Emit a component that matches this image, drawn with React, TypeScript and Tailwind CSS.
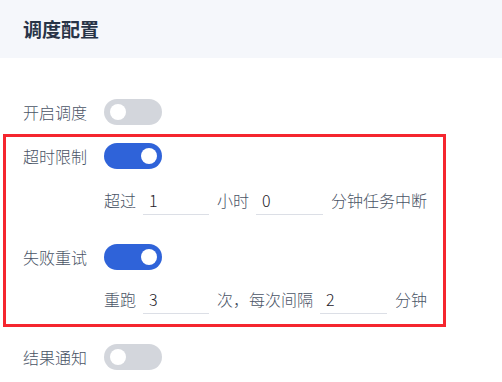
import { useState } from "react";

const font = { fontFamily: '"Noto Sans CJK SC", "Noto Sans", sans-serif' };

function Toggle({ on, onChange }: { on: boolean; onChange: () => void }) {
  return (
    <button
      onClick={onChange}
      className={`relative w-[58px] h-[26px] rounded-full shrink-0 transition-colors ${on ? "bg-[#2f63d9]" : "bg-[#d3d6dc]"}`}
    >
      <span
        className={`absolute top-[5px] w-[16px] h-[16px] rounded-full bg-white transition-all ${on ? "left-[37px]" : "left-[6px]"}`}
      />
    </button>
  );
}

function Row({ label, on, onChange }: { label: string; on: boolean; onChange: () => void }) {
  return (
    <div className="flex items-center h-[26px]">
      <span className="w-[81px] text-[16px] leading-none font-light text-[#4a5466]">{label}</span>
      <Toggle on={on} onChange={onChange} />
    </div>
  );
}

function NumInput({ value, w = "w-[66px]" }: { value: string; w?: string }) {
  return (
    <input
      defaultValue={value}
      className={`${w} h-[30px] ml-[7px] mr-[8px] px-[6px] border-b border-[#dcdfe6] text-[16px] font-light text-[#1d2129] outline-none bg-transparent`}
    />
  );
}

export default function App() {
  const [enabled, setEnabled] = useState(false);
  const [timeout, setTimeoutOn] = useState(true);
  const [retry, setRetry] = useState(true);
  const [notify, setNotify] = useState(false);

  return (
    <div className="w-[502px] h-[382px] bg-white overflow-hidden" style={font}>
      {/* header */}
      <div className="h-[58px] bg-[#f5f7fb] flex items-center pl-[23px]">
        <h1 className="text-[19px] font-bold text-[#283447]">调度配置</h1>
      </div>

      <div className="pt-[41px] pl-[23px]">
        <Row label="开启调度" on={enabled} onChange={() => setEnabled(!enabled)} />
      </div>

      {/* highlighted block */}
      <div className="mt-[9px] ml-[3px] w-[443px] border-[3px] border-[#f5262f] pl-[17px] pt-[6px] pb-[10px]">
        <Row label="超时限制" on={timeout} onChange={() => setTimeoutOn(!timeout)} />
        <div className="flex items-center text-[16px] font-light text-[#4a5466] ml-[81px] mt-[16px]">
          <span>超过</span>
          <NumInput value="1" />
          <span>小时</span>
          <NumInput value="0" w="w-[67px]" />
          <span>分钟任务中断</span>
        </div>

        <div className="mt-[29px]">
          <Row label="失败重试" on={retry} onChange={() => setRetry(!retry)} />
        </div>
        <div className="flex items-center text-[16px] font-light text-[#4a5466] ml-[81px] mt-[14px]">
          <span>重跑</span>
          <NumInput value="3" />
          <span>次，每次间隔</span>
          <NumInput value="2" w="w-[67px]" />
          <span>分钟</span>
        </div>
      </div>

      <div className="pt-[17px] pl-[23px]">
        <Row label="结果通知" on={notify} onChange={() => setNotify(!notify)} />
      </div>
    </div>
  );
}
